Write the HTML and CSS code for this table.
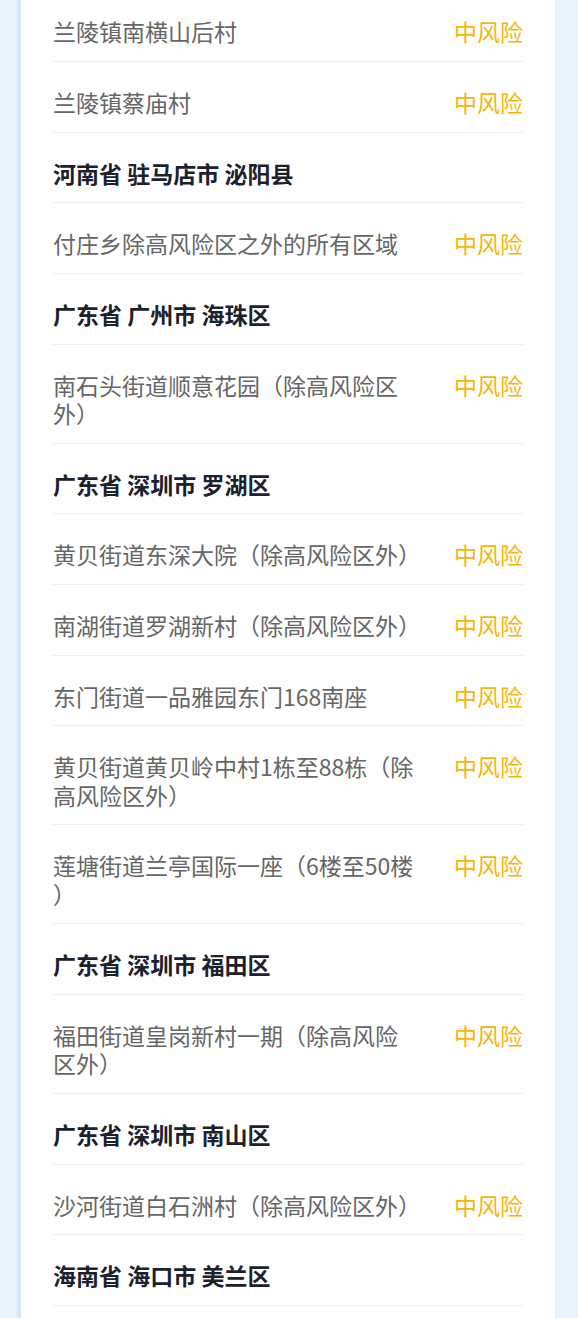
FILE: index.html
```html
<!DOCTYPE html>
<html lang="zh-CN">
<head>
  <meta charset="UTF-8">
  <title>中风险地区</title>
  <meta name="viewport" content="width=device-width, initial-scale=1">
  <link rel="stylesheet" href="styles.css">
</head>
<body>

  <div class="card">
    <ul class="list">
      <li class="row"><span class="name">兰陵镇南横山后村</span><span class="level">中风险</span></li>
      <li class="row"><span class="name">兰陵镇蔡庙村</span><span class="level">中风险</span></li>

      <li class="row area">河南省 驻马店市 泌阳县</li>
      <li class="row"><span class="name">付庄乡除高风险区之外的所有区域</span><span class="level">中风险</span></li>

      <li class="row area">广东省 广州市 海珠区</li>
      <li class="row"><span class="name">南石头街道顺意花园（除高风险区外）</span><span class="level">中风险</span></li>

      <li class="row area">广东省 深圳市 罗湖区</li>
      <li class="row"><span class="name">黄贝街道东深大院（除高风险区外）</span><span class="level">中风险</span></li>
      <li class="row"><span class="name">南湖街道罗湖新村（除高风险区外）</span><span class="level">中风险</span></li>
      <li class="row"><span class="name">东门街道一品雅园东门168南座</span><span class="level">中风险</span></li>
      <li class="row"><span class="name">黄贝街道黄贝岭中村1栋至88栋（除高风险区外）</span><span class="level">中风险</span></li>
      <li class="row"><span class="name">莲塘街道兰亭国际一座（6楼至50楼）</span><span class="level">中风险</span></li>

      <li class="row area">广东省 深圳市 福田区</li>
      <li class="row"><span class="name">福田街道皇岗新村一期（除高风险区外）</span><span class="level">中风险</span></li>

      <li class="row area">广东省 深圳市 南山区</li>
      <li class="row"><span class="name">沙河街道白石洲村（除高风险区外）</span><span class="level">中风险</span></li>

      <li class="row area">海南省 海口市 美兰区</li>
    </ul>
  </div>

</body>
</html>
```

FILE: styles.css
```css
body {
  margin: 0;
  background-color: #e9f3fb;
  font-family: "Noto Sans CJK SC", "Noto Sans", sans-serif;
}

.card {
  margin: -8.67px 23px 0 21px;
  padding: 0 32px 40px;
  background-color: #fff;
  box-shadow: -3px 0 4px rgba(150, 190, 220, 0.35);
}

.list {
  list-style: none;
  margin: 0;
  padding: 0;
}

.row {
  display: flex;
  justify-content: space-between;
  align-items: flex-start;
  padding: 26px 0 15.34px;
  border-bottom: 1px solid #f0f0f0;
  font-size: 23px;
  line-height: 28.33px;
}

.name {
  flex: 0 1 366px;
  color: #666;
  line-break: anywhere;
}

.level {
  color: #f6b50a;
  white-space: nowrap;
}

.area {
  font-weight: bold;
  color: #1b212d;
}
```
